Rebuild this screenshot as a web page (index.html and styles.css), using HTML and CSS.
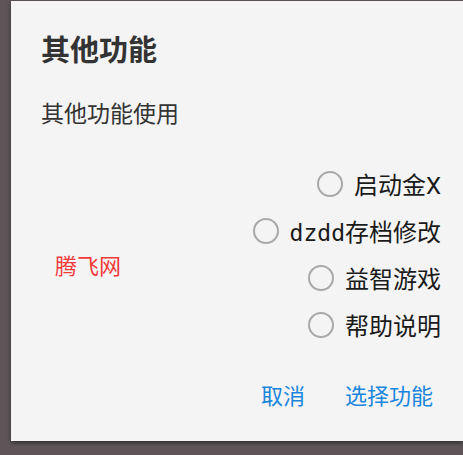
FILE: index.html
```html
<!DOCTYPE html>
<html>
<head>
<meta charset="utf-8">
<link rel="stylesheet" href="styles.css">
</head>
<body>
<div class="dialog">
  <div class="title">其他功能</div>
  <div class="message">其他功能使用</div>
  <div class="content">
    <div class="brand">腾飞网</div>
    <div class="options">
      <label class="option"><span class="radio"></span><span class="label">启动金X</span></label>
      <label class="option"><span class="radio"></span><span class="label"><span class="latin">dzdd</span>存档修改</span></label>
      <label class="option"><span class="radio"></span><span class="label">益智游戏</span></label>
      <label class="option"><span class="radio"></span><span class="label">帮助说明</span></label>
    </div>
  </div>
  <div class="actions">
    <span class="btn">取消</span>
    <span class="btn">选择功能</span>
  </div>
</div>
</body>
</html>
```
FILE: styles.css
```css
html, body {
  margin: 0;
  padding: 0;
}
body {
  background: #5d5558;
  width: 463px;
  height: 455px;
  overflow: hidden;
  font-family: Roboto, "Noto Sans CJK SC", sans-serif;
}
.dialog {
  margin: 1px 0 0 11px;
  width: 452px;
  height: 440px;
  background: #f4f4f4;
  box-shadow: 0 2px 4px rgba(0,0,0,0.45);
  box-sizing: border-box;
  padding: 33px 30px 0 30px;
  display: flex;
  flex-direction: column;
}
.title {
  font-size: 29px;
  line-height: 34px;
  font-weight: bold;
  color: #333;
}
.message {
  margin-top: 33px;
  font-size: 23px;
  line-height: 28px;
  color: #333;
}
.content {
  display: flex;
  justify-content: space-between;
  margin-top: 31px;
  margin-right: -8px;
}
.brand {
  margin-left: 14px;
  margin-top: 95px;
  font-size: 22px;
  line-height: 24px;
  color: #f23a3a;
}
.options {
  display: flex;
  flex-direction: column;
  align-items: flex-end;
}
.option {
  display: flex;
  align-items: center;
  height: 47px;
  gap: 11px;
}
.radio {
  width: 22px;
  height: 22px;
  border: 2px solid #a8a8a8;
  border-radius: 50%;
}
.label {
  font-size: 24px;
  color: #1a1a1a;
}
.latin {
  font-family: "DejaVu Sans Mono", monospace;
  font-size: 23px;
}
.actions {
  display: flex;
  justify-content: flex-end;
  gap: 40px;
  margin-top: 35px;
}
.btn {
  font-size: 22px;
  line-height: 28px;
  color: #1a86dc;
}
```
